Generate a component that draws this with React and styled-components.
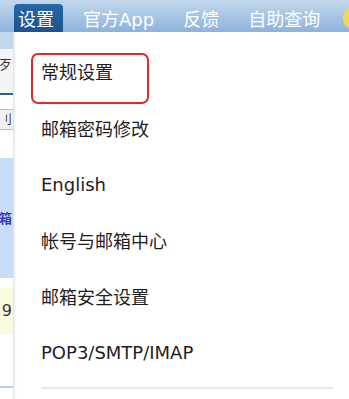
import styled, { createGlobalStyle } from "styled-components";

const GlobalStyle = createGlobalStyle`
  html, body {
    margin: 0;
    padding: 0;
    background: #ffffff;
  }
  body {
    font-family: "DejaVu Sans", "Noto Sans CJK SC", sans-serif;
  }
`;

//#region styled components
const Page = styled.div`
  width: 349px;
  height: 399px;
  overflow: hidden;
  display: flex;
  flex-direction: column;
  background: #ffffff;
`;

const TopBar = styled.div`
  height: 32px;
  flex-shrink: 0;
  display: flex;
  align-items: flex-end;
  padding-left: 14px;
  background: linear-gradient(#c3d8ee, #8db3db);
  position: relative;
`;

const Tab = styled.div`
  height: 28px;
  display: flex;
  align-items: center;
  padding: 0 ${(p) => (p.$active ? 9 : 4)}px 0 4px;
  margin-left: ${(p) => p.$gap}px;
  font-size: 18px;
  color: #ffffff;
  border-radius: 4px 4px 0 0;
  background: ${(p) => (p.$active ? "linear-gradient(#2a67a6, #1c528f)" : "transparent")};
  white-space: nowrap;
`;

const Coin = styled.div`
  position: absolute;
  right: -18px;
  top: 6px;
  width: 24px;
  height: 24px;
  border-radius: 50%;
  background: #f6d55c;
`;

const Body = styled.div`
  flex: 1;
  display: grid;
  grid-template-columns: 14px 1fr;
`;

const Strip = styled.div`
  display: flex;
  flex-direction: column;
  overflow: hidden;
  border-right: 1px solid #e2e2e2;
  box-shadow: 1px 0 2px rgba(0, 0, 0, 0.08);
`;

const Band = styled.div`
  height: ${(p) => p.$h}px;
  flex-shrink: 0;
  box-sizing: content-box;
  background: ${(p) => p.$bg || "#ffffff"};
  border-bottom: ${(p) => p.$line || "none"};
  display: flex;
  align-items: ${(p) => p.$align || "center"};
  justify-content: flex-end;
  padding-right: 1px;
  font-size: ${(p) => p.$size || 12}px;
  line-height: 1;
  color: ${(p) => p.$color || "#333333"};
  font-weight: ${(p) => p.$weight || 400};
  white-space: nowrap;
  overflow: hidden;
`;

const Menu = styled.div`
  display: flex;
  flex-direction: column;
  padding: 21px 16px 0 27px;
`;

const Item = styled.div`
  height: 56px;
  display: flex;
  align-items: center;
  font-size: 18px;
  color: #1e1e1e;
  white-space: nowrap;
`;

const Highlight = styled.div`
  height: 51px;
  width: 118px;
  margin-left: -10px;
  margin-bottom: -4px;
  box-sizing: border-box;
  padding: 7px 0 0 8px;
  display: flex;
  align-items: flex-start;
  line-height: 1.2;
  border: 2px solid #e8262a;
  border-radius: 7px;
  font-size: 18px;
  color: #1e1e1e;
`;

const Divider = styled.div`
  height: 2px;
  margin-top: 7px;
  background: #e9e9e9;
`;
//#endregion

const tabs = [
  { label: "设置", active: true, gap: 0 },
  { label: "官方App", gap: 16 },
  { label: "反馈", gap: 21 },
  { label: "自助查询", gap: 21 },
];

const items = ["邮箱密码修改", "English", "帐号与邮箱中心", "邮箱安全设置", "POP3/SMTP/IMAP"];

const App = () => {
  return (
    <Page>
      <GlobalStyle />
      <TopBar>
        {tabs.map((t) => (
          <Tab key={t.label} $active={t.active} $gap={t.gap}>
            {t.label}
          </Tab>
        ))}
        <Coin />
      </TopBar>
      <Body>
        <Strip>
          <Band $h={17} $bg="#c2d7ee" />
          <Band $h={44} $bg="#f3f4f6" $line="2px solid #2b5f98" $align="flex-start" $size={13}>
            <span style={{ marginTop: 9 }}>歹</span>
          </Band>
          <Band $h={14} $bg="#ffffff" $line="1px solid #bdbdbd" />
          <Band $h={19} $bg="#f0f0f0" $line="1px solid #bdbdbd" $size={12}>
            刂
          </Band>
          <Band $h={28} $bg="#ffffff" />
          <Band $h={120} $bg="#c7ddf6" $color="#3b3bb8" $weight={700} $size={13}>
            箱
          </Band>
          <Band $h={10} $bg="#ffffff" />
          <Band $h={46} $bg="#fbf9de" $size={16}>
            9
          </Band>
          <Band $h={52} $bg="#ffffff" $line="2px solid #bccfe6" />
        </Strip>
        <Menu>
          <Highlight>常规设置</Highlight>
          {items.map((label) => (
            <Item key={label}>{label}</Item>
          ))}
          <Divider />
        </Menu>
      </Body>
    </Page>
  );
};

export default App;
